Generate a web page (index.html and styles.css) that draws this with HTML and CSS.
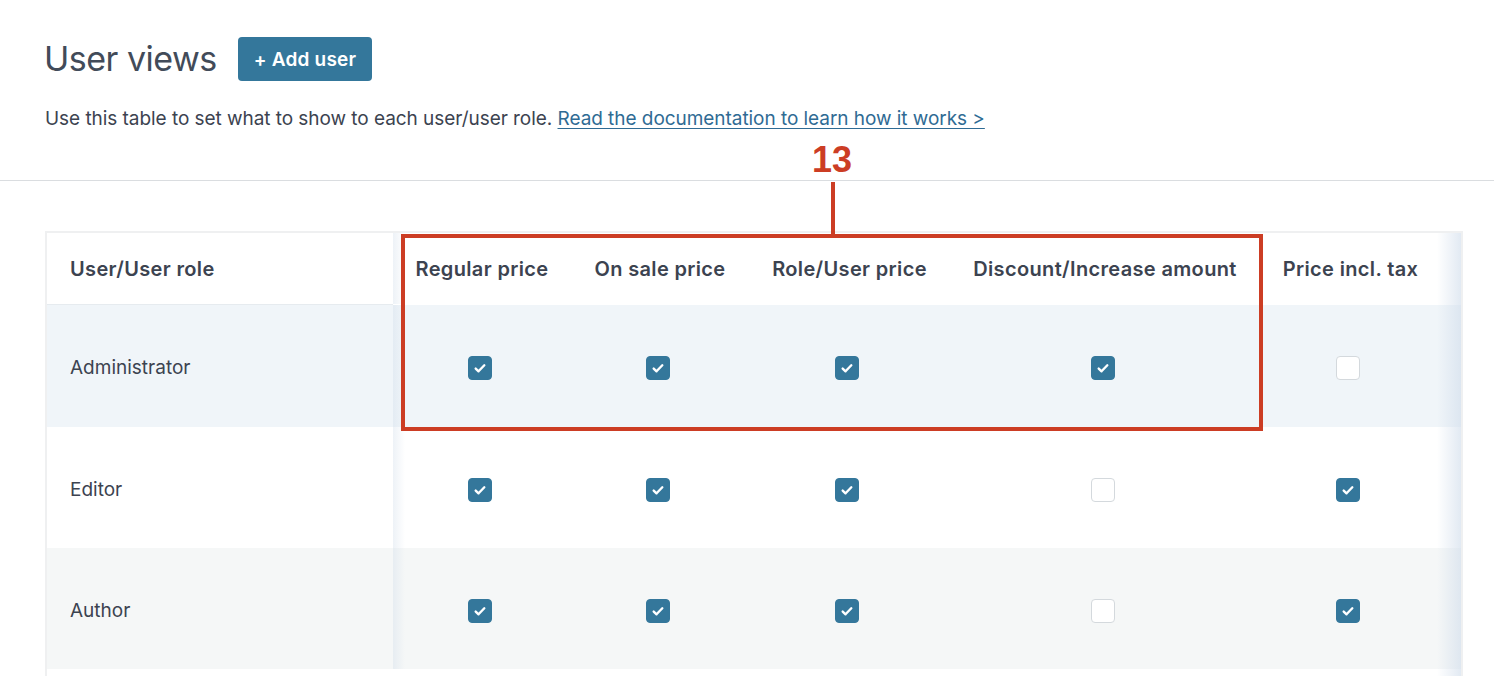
FILE: index.html
```html
<!DOCTYPE html>
<html lang="en">
<head>
<meta charset="utf-8">
<title>User views</title>
<link rel="stylesheet" href="styles.css">
</head>
<body>
<div class="page">
  <div class="intro">
    <div class="title-row">
      <h1 class="title">User views</h1>
      <button class="add-btn" type="button">+ Add user</button>
    </div>
    <p class="desc">Use this table to set what to show to each user/user role. <a href="#" class="doc-link">Read the documentation to learn how it works &gt;</a></p>
  </div>
  <hr class="divider">
  <div class="table-wrap">
    <table class="views">
      <colgroup>
        <col class="c-role">
        <col class="c-reg">
        <col class="c-sale">
        <col class="c-rolep">
        <col class="c-disc">
        <col class="c-tax">
      </colgroup>
      <thead>
        <tr>
          <th class="first">User/User role</th>
          <th>Regular price</th>
          <th>On sale price</th>
          <th>Role/User price</th>
          <th>Discount/Increase amount</th>
          <th class="last">Price incl. tax</th>
        </tr>
      </thead>
      <tbody>
        <tr class="row-hover">
          <td class="first"><span class="role">Administrator</span></td>
          <td><span class="cb on"><svg viewBox="0 0 24 24"><path d="M7.3 12.6l3.1 3 6.3-6.6"/></svg></span></td>
          <td><span class="cb on"><svg viewBox="0 0 24 24"><path d="M7.3 12.6l3.1 3 6.3-6.6"/></svg></span></td>
          <td><span class="cb on"><svg viewBox="0 0 24 24"><path d="M7.3 12.6l3.1 3 6.3-6.6"/></svg></span></td>
          <td><span class="cb on"><svg viewBox="0 0 24 24"><path d="M7.3 12.6l3.1 3 6.3-6.6"/></svg></span></td>
          <td class="last"><span class="cb"></span></td>
        </tr>
        <tr class="row-plain">
          <td class="first"><span class="role">Editor</span></td>
          <td><span class="cb on"><svg viewBox="0 0 24 24"><path d="M7.3 12.6l3.1 3 6.3-6.6"/></svg></span></td>
          <td><span class="cb on"><svg viewBox="0 0 24 24"><path d="M7.3 12.6l3.1 3 6.3-6.6"/></svg></span></td>
          <td><span class="cb on"><svg viewBox="0 0 24 24"><path d="M7.3 12.6l3.1 3 6.3-6.6"/></svg></span></td>
          <td><span class="cb"></span></td>
          <td class="last"><span class="cb on"><svg viewBox="0 0 24 24"><path d="M7.3 12.6l3.1 3 6.3-6.6"/></svg></span></td>
        </tr>
        <tr class="row-alt">
          <td class="first"><span class="role">Author</span></td>
          <td><span class="cb on"><svg viewBox="0 0 24 24"><path d="M7.3 12.6l3.1 3 6.3-6.6"/></svg></span></td>
          <td><span class="cb on"><svg viewBox="0 0 24 24"><path d="M7.3 12.6l3.1 3 6.3-6.6"/></svg></span></td>
          <td><span class="cb on"><svg viewBox="0 0 24 24"><path d="M7.3 12.6l3.1 3 6.3-6.6"/></svg></span></td>
          <td><span class="cb"></span></td>
          <td class="last"><span class="cb on"><svg viewBox="0 0 24 24"><path d="M7.3 12.6l3.1 3 6.3-6.6"/></svg></span></td>
        </tr>
      </tbody>
    </table>
  </div>

  <div class="callout-num">13</div>
  <div class="callout-line"></div>
  <div class="callout-box"></div>
</div>
</body>
</html>
```

FILE: styles.css
```css
html, body {
  margin: 0;
  padding: 0;
  background: #ffffff;
}

body {
  font-family: Inter, "Noto Sans", "Liberation Sans", sans-serif;
  color: #3c4350;
  overflow: hidden;
}

.page {
  position: relative;
  width: 1494px;
  height: 676px;
  overflow: hidden;
}

.intro {
  padding: 37px 0 0 45px;
}

.title-row {
  display: flex;
  align-items: center;
  gap: 21px;
  height: 44px;
}

.title {
  margin: 0 0 0 -1px;
  font-size: 34px;
  font-weight: 400;
  letter-spacing: -0.5px;
  color: #424b59;
  line-height: 44px;
}

.add-btn {
  height: 44px;
  padding: 0 16px;
  border: none;
  border-radius: 4px;
  background: #34779b;
  color: #ffffff;
  font-family: inherit;
  font-size: 19px;
  font-weight: 600;
  letter-spacing: 0.2px;
  cursor: pointer;
}

.desc {
  margin: 26px 0 0 0;
  font-size: 19px;
  line-height: 24px;
  letter-spacing: -0.05px;
  color: #3c4350;
}

.doc-link {
  color: #2f6b94;
  text-decoration: underline;
  text-underline-offset: 3px;
  text-decoration-thickness: 1px;
}

.divider {
  margin: 49px 0 0 0;
  border: none;
  border-top: 1px solid #dadde0;
  height: 0;
}

.table-wrap {
  position: relative;
  margin: 50px 0 0 45px;
  width: 1414px;
  min-height: 470px;
  border: 2px solid #eff0f1;
  border-bottom: none;
  overflow: hidden;
}

.table-wrap::after {
  content: "";
  position: absolute;
  top: 0;
  right: 0;
  bottom: 0;
  width: 24px;
  background: linear-gradient(to right, rgba(220, 230, 240, 0), rgba(210, 222, 236, 0.65));
  pointer-events: none;
}

.views {
  border-collapse: collapse;
  table-layout: fixed;
  width: 1414px;
}

.c-role { width: 346px; }
.c-reg { width: 178px; }
.c-sale { width: 178px; }
.c-rolep { width: 201px; }
.c-disc { width: 310px; }
.c-tax { width: 201px; }

.views th {
  height: 71px;
  padding: 0;
  font-size: 20px;
  font-weight: 600;
  letter-spacing: 0.35px;
  text-align: center;
  white-space: nowrap;
  color: #3c4350;
  background: #ffffff;
  vertical-align: middle;
}

.views th.first {
  border-bottom: 1px solid #e6ebef;
}

.views td {
  height: 121px;
  padding: 0;
  text-align: center;
  vertical-align: middle;
  font-size: 19px;
  color: #3c4350;
}

.role {
  display: inline-block;
  margin-top: 3px;
}

.views .last {
  padding-right: 20px;
}

.views .first {
  position: relative;
  text-align: left;
  padding-left: 23px;
}

.views .first::after {
  content: "";
  position: absolute;
  top: 0;
  bottom: 0;
  right: -12px;
  width: 12px;
  background: linear-gradient(to right, rgba(205, 218, 232, 0.35), rgba(205, 218, 232, 0));
  pointer-events: none;
}

.row-hover td { background: #f0f5f9; height: 122px; }
.row-plain td { background: #ffffff; }
.row-alt td { background: #f5f7f7; }

.cb {
  display: inline-block;
  width: 24px;
  height: 24px;
  box-sizing: border-box;
  border: 1px solid #d4d9dd;
  border-radius: 4px;
  background: #ffffff;
  vertical-align: middle;
  margin: 4px 5px 0 0;
}

.cb.on {
  border-color: #34779b;
  background: #34779b;
}

.cb svg {
  display: block;
  width: 22px;
  height: 22px;
  fill: none;
  stroke: #ffffff;
  stroke-width: 2.6;
  stroke-linecap: round;
  stroke-linejoin: round;
}

.callout-num {
  position: absolute;
  left: 812px;
  top: 140px;
  font-family: "Liberation Sans", Arial, sans-serif;
  font-weight: 700;
  font-size: 36px;
  line-height: 40px;
  color: #cc3d24;
}

.callout-line {
  position: absolute;
  left: 831px;
  top: 182px;
  width: 4px;
  height: 53px;
  background: #cc3d24;
}

.callout-box {
  position: absolute;
  left: 401px;
  top: 234px;
  width: 862px;
  height: 197px;
  box-sizing: border-box;
  border: 4px solid #cc3d24;
}
```
